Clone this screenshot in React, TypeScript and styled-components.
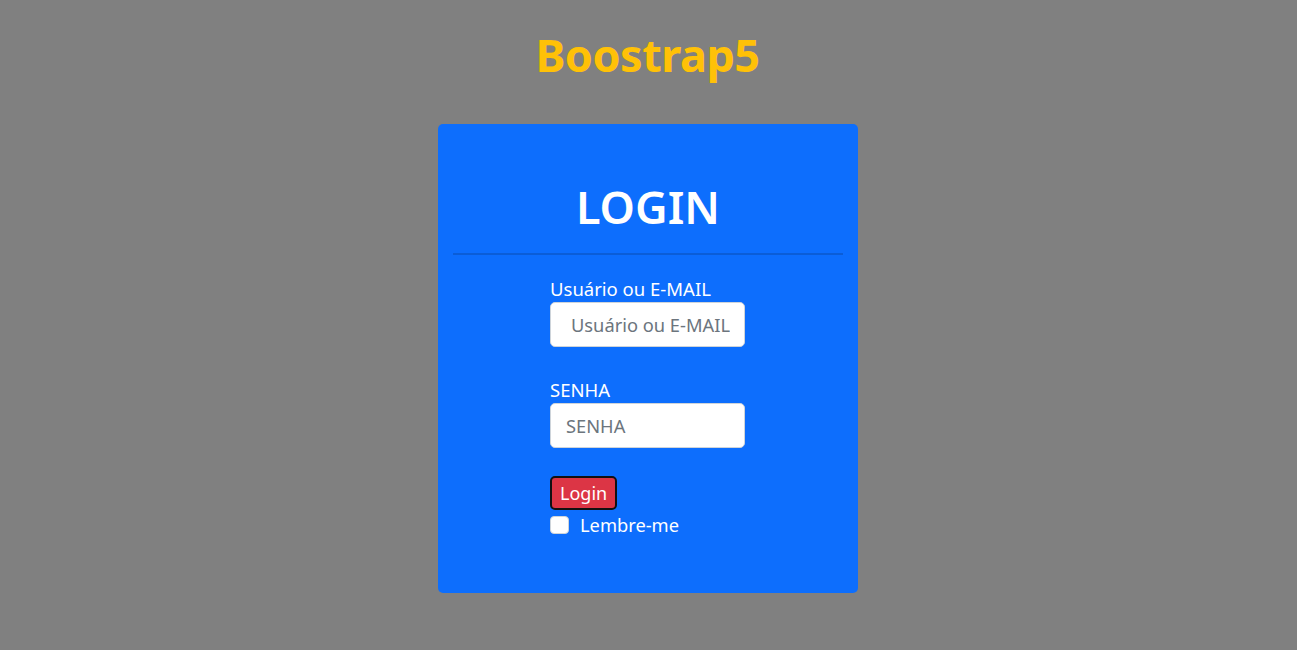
import React from "react";
import styled, { createGlobalStyle } from "styled-components";

const Global = createGlobalStyle`
  html, body { margin: 0; padding: 0; }
  body {
    background: #808080;
    font-family: "Noto Sans", "Open Sans", sans-serif;
    color: #fff;
  }
`;

const Page = styled.div`
  display: flex;
  flex-direction: column;
  align-items: center;
  padding-top: 26px;
`;

const Title = styled.h1`
  margin: 0 2px 0 0;
  font-size: 45px;
  line-height: 58px;
  font-weight: 700;
  color: #ffc107;
  letter-spacing: -0.5px;
`;

const Card = styled.div`
  margin: 40px 1px 0 0;
  width: 420px;
  height: 469px;
  box-sizing: border-box;
  background: #0d6efd;
  border-radius: 5px;
  padding: 54px 15px 0;
  display: flex;
  flex-direction: column;
`;

const Heading = styled.h2`
  margin: 0;
  text-align: center;
  font-size: 45px;
  line-height: 58px;
  font-weight: 600;
  color: #fff;
`;

const Rule = styled.hr`
  margin: 17px 0 0;
  border: 0;
  border-top: 2px solid rgba(0, 0, 0, 0.15);
`;

const Form = styled.form`
  display: flex;
  flex-direction: column;
  align-items: flex-start;
  margin-left: 97px;
  padding-top: 21px;
`;

const Field = styled.div<{ $gap?: number }>`
  display: flex;
  flex-direction: column;
  margin-bottom: ${(p) => p.$gap ?? 30}px;
`;

const Label = styled.label`
  font-size: 18.5px;
  line-height: 26px;
  color: #fff;
`;

const Input = styled.input<{ $pad: number }>`
  width: 195px;
  height: 45px;
  box-sizing: border-box;
  border: 1px solid #ced4da;
  border-radius: 5px;
  background: #fff;
  font-family: inherit;
  font-size: 18.3px;
  padding: 0 14px 0 ${(p) => p.$pad}px;
  &::placeholder { color: #6c757d; }
`;

const Button = styled.button`
  font-family: inherit;
  font-size: 18px;
  line-height: 22px;
  color: #fff;
  background: #dc3545;
  border: 2px solid #111;
  border-radius: 5px;
  padding: 4px 8px;
`;

const Check = styled.label`
  display: flex;
  align-items: center;
  gap: 11px;
  margin-top: 3px;
  font-size: 18.3px;
  line-height: 24px;
`;

const Box = styled.span`
  width: 19px;
  height: 18px;
  border-radius: 4px;
  background: #fff;
  box-sizing: border-box;
  border: 1px solid #ced4da;
`;

export default function App() {
  return (
    <>
      <Global />
      <Page>
        <Title>Boostrap5</Title>
        <Card>
          <Heading>LOGIN</Heading>
          <Rule />
          <Form>
            <Field>
              <Label>Usuário ou E-MAIL</Label>
              <Input $pad={20} placeholder="Usuário ou E-MAIL" />
            </Field>
            <Field $gap={28}>
              <Label>SENHA</Label>
              <Input $pad={15} placeholder="SENHA" type="password" />
            </Field>
            <Button type="button">Login</Button>
            <Check>
              <Box />
              Lembre-me
            </Check>
          </Form>
        </Card>
      </Page>
    </>
  );
}
